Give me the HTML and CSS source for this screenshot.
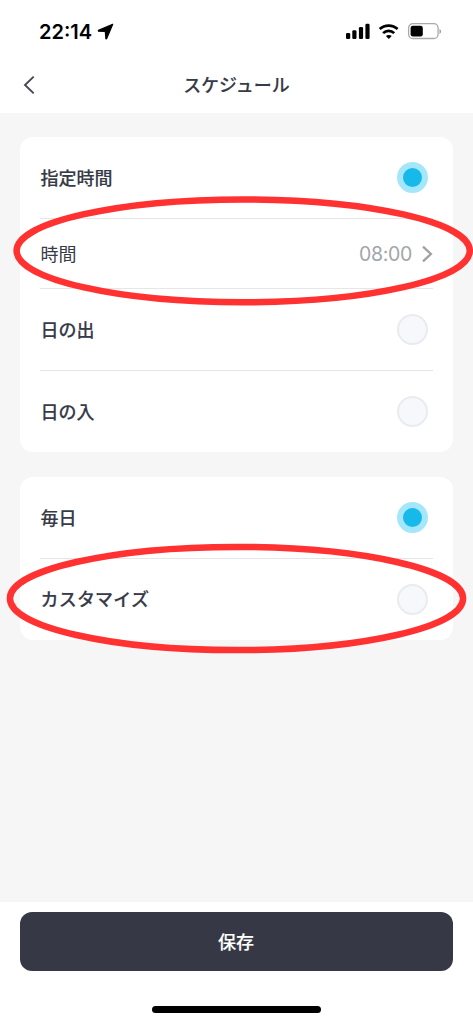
FILE: index.html
```html
<!DOCTYPE html>
<html lang="ja">
<head>
<meta charset="utf-8">
<meta name="viewport" content="width=device-width, initial-scale=1">
<title>スケジュール</title>
<link rel="stylesheet" href="styles.css">
</head>
<body>
<div class="screen">
  <div class="status">
    <span class="clock">22:14</span>
    <svg class="location" width="17" height="17" viewBox="0 0 17 17"><path d="M15.700 1.300 1.400 7.400l.1.800 6.800.3.600 7.200.7.100z"/></svg>
    <svg class="signals" width="100" height="20" viewBox="0 0 100 20">
      <rect x="1" y="11" width="4.200" height="6" rx="1.300"/>
      <rect x="7.300" y="8.300" width="4.200" height="8.700" rx="1.300"/>
      <rect x="13.900" y="5" width="4.200" height="12" rx="1.300"/>
      <rect x="20.400" y="1.800" width="4.200" height="15.200" rx="1.300"/>
      <g class="wifi">
        <path d="M34.700 7.100a13 13 0 0 1 17.900 0"/>
        <path d="M38.100 11.100a8 8 0 0 1 11.100 0"/>
      </g>
      <path d="M40.900 14c1.500-1.500 4.300-1.500 5.800 0l-2.900 3z"/>
      <rect class="battery-shell" x="63.600" y="1.700" width="29.500" height="14.800" rx="4.300"/>
      <rect x="65.600" y="3.700" width="12.200" height="10.900" rx="2.300"/>
      <path class="battery-cap" d="M94.500 7v4.800c2-.8 2-4 0-4.800z"/>
    </svg>
  </div>
  <header class="nav">
    <svg class="back" width="12" height="20" viewBox="0 0 12 20"><path d="M10.700 1.600 2 10l8.700 8.400"/></svg>
    <h1 class="title">スケジュール</h1>
  </header>
  <main class="content">
    <section class="card">
      <div class="row"><span class="label">指定時間</span><span class="radio radio-on"></span></div>
      <div class="row row-time"><span class="label label-light">時間</span><span class="time">08:00</span><svg class="chevron" width="12" height="18" viewBox="0 0 12 18"><path d="m2 1.600 7.900 7.400L2 16.400"/></svg></div>
      <div class="row"><span class="label">日の出</span><span class="radio"></span></div>
      <div class="row"><span class="label">日の入</span><span class="radio"></span></div>
    </section>
    <section class="card">
      <div class="row"><span class="label">毎日</span><span class="radio radio-on"></span></div>
      <div class="row"><span class="label label-wide">カスタマイズ</span><span class="radio"></span></div>
    </section>
  </main>
  <footer class="footer">
    <button class="save">保存</button>
    <div class="home-bar"></div>
  </footer>
  <svg class="marks" width="473" height="1024" viewBox="0 0 473 1024">
    <ellipse cx="243.200" cy="250.800" rx="226.600" ry="51.400"/>
    <ellipse cx="236.500" cy="598.500" rx="226.600" ry="51.600"/>
  </svg>
</div>
</body>
</html>
```
FILE: styles.css
```css
* {
  box-sizing: border-box;
}

body {
  margin: 0;
  background: #fff;
  color: #373a47;
  font-family: "Inter", "Noto Sans CJK JP", sans-serif;
}

.screen {
  position: relative;
  display: flex;
  flex-direction: column;
  width: 473px;
  height: 1024px;
  overflow: hidden;
  background: #f6f6f6;
}

.status {
  display: flex;
  align-items: center;
  height: 60px;
  padding: 3px 28px 0 39px;
  background: #fff;
  color: #000;
}

.clock {
  width: 53px;
  font-size: 20px;
  font-weight: 600;
  letter-spacing: 0;
  white-space: nowrap;
}

.location {
  margin-left: 5px;
  stroke: #000;
  stroke-linejoin: round;
  stroke-width: 1.200;
}

.signals {
  margin-left: auto;
}

.wifi {
  fill: none;
  stroke: #000;
  stroke-width: 2.700;
}

.battery-shell {
  fill: none;
  stroke: #aaa;
  stroke-width: 1.300;
}

.battery-cap {
  fill: #999;
}

.nav {
  display: grid;
  grid-template-columns: 40px 1fr 40px;
  align-items: center;
  height: 52.500px;
  padding: 0 0 3px;
  background: #fff;
}

.back {
  justify-self: end;
  margin-right: 5px;
  fill: none;
  stroke: #454854;
  stroke-width: 1.900;
}

.title {
  margin: 0;
  padding-top: 2px;
  font-size: 18px;
  font-weight: 500;
  line-height: 26px;
  text-align: center;
  -webkit-text-stroke: 0.150px;
}

.content {
  display: flex;
  flex: 1;
  flex-direction: column;
  gap: 25px;
  padding: 24.500px 20px 0;
}

.card {
  padding: 0 20px;
  border-radius: 13px;
  background: #fff;
}

.row {
  display: flex;
  align-items: center;
  height: 82px;
  padding-right: 5px;
}

.row + .row {
  border-top: 1px solid #e6e6e7;
}

.card .row:first-child {
  height: 81px;
}

.card .row-time {
  height: 70px;
  padding-right: 0;
}

.label {
  margin-right: auto;
  padding: 2px 0 0 0.5px;
  font-size: 18px;
  font-weight: 500;
  line-height: 26px;
  -webkit-text-stroke: 0.150px;
}

.label-light {
  font-weight: 400;
  -webkit-text-stroke: 0;
}

.label-wide {
  padding-top: 0;
  letter-spacing: 0.200px;
}

.radio {
  width: 31px;
  height: 31px;
  border: 2.500px solid #eaebef;
  border-radius: 50%;
  background: #f7f8fb;
}

.radio-on {
  border: 6.500px solid #a5e7fa;
  background: #17b8ea;
}

.time {
  color: #a2a5a9;
  font-size: 19.5px;
  letter-spacing: -0.300px;
}

.chevron {
  margin-left: 9px;
  fill: none;
  stroke: #a2a2a4;
  stroke-width: 2.300;
}

.footer {
  display: flex;
  flex-direction: column;
  align-items: center;
  height: 122px;
  padding: 10px 20px 0;
  background: #fff;
}

.save {
  width: 100%;
  height: 59px;
  padding: 0 1px 1px 0;
  border: 0;
  border-radius: 12px;
  background: #363945;
  color: #fff;
  font: 500 18px/26px "Noto Sans CJK JP", sans-serif;
  -webkit-text-stroke: 0.150px;
}

.home-bar {
  width: 169px;
  height: 6.500px;
  margin-top: 35.300px;
  border-radius: 4px;
  background: #000;
}

/* Highlight rings laid over the settings */
.marks {
  position: absolute;
  top: 0;
  left: 0;
  fill: none;
  stroke: #ff3131;
  stroke-width: 6.500;
  pointer-events: none;
}
```
